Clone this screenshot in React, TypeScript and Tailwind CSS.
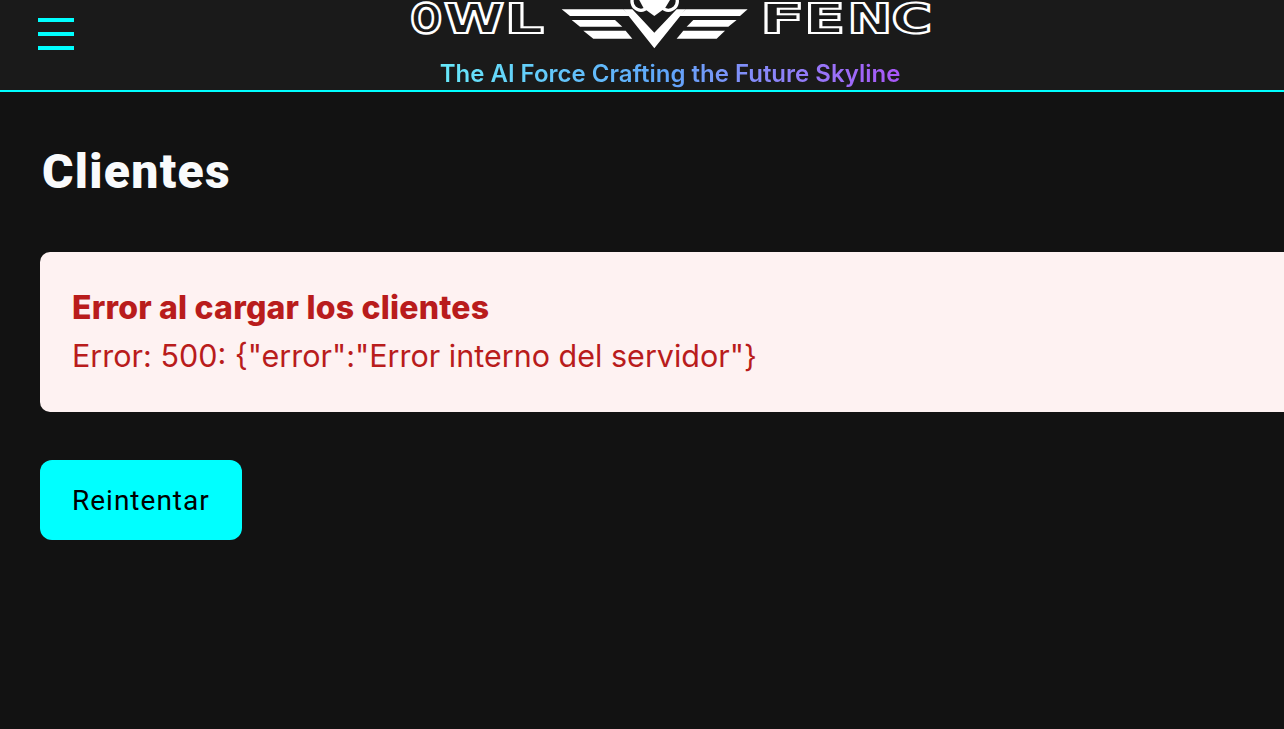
import React from 'react';

function Letter({ ch, x, sx }: { ch: string; x: number; sx: number }) {
  return (
    <text
      transform={`translate(${x} 33) scale(${sx} 1)`}
      fontFamily="'DejaVu Sans', sans-serif"
      fontWeight={700}
      fontSize={41}
      fill="none"
      stroke="#ffffff"
      strokeWidth={2.6}
      vectorEffect="non-scaling-stroke"
    >
      {ch}
    </text>
  );
}

function Logo() {
  return (
    <svg width="520" height="50" viewBox="410 0 520 50" className="block overflow-visible">
      <Letter ch="O" x={410.6} sx={0.9} />
      <Letter ch="W" x={444} sx={1.33} />
      <Letter ch="L" x={504.7} sx={1.5} />
      <Letter ch="F" x={760} sx={1.6} />
      <Letter ch="E" x={804} sx={1.47} />
      <Letter ch="N" x={847.5} sx={1.3} />
      <Letter ch="C" x={891.5} sx={1.35} />
      {/* wings, drawn in 3x units from the crop */}
      <g transform="translate(555 0) scale(0.3333)" fill="#ffffff">
        <polygon points="20,28 205,28 225,48 45,48" />
        <polygon points="578,28 392,28 372,48 555,48" />
        <polygon points="205,28 232,28 298,98 365,28 392,28 298,145" />
        <polygon points="50,60 180,60 202,80 75,80" />
        <polygon points="545,60 415,60 395,80 520,80" />
        <polygon points="85,92 212,92 232,116 115,116" />
        <polygon points="510,92 385,92 365,116 485,116" />
      </g>
      <g transform="translate(555 0) scale(0.3333)">
        <circle cx="258" cy="4" r="27" fill="#1a1a1a" stroke="#ffffff" strokeWidth="10" />
        <circle cx="340" cy="4" r="27" fill="#1a1a1a" stroke="#ffffff" strokeWidth="10" />
        <path d="M250 -5 H348 L330 25 L298 48 L266 25 Z" fill="#ffffff" />
      </g>
    </svg>
  );
}

export default function App() {
  return (
    <div className="h-screen w-full overflow-hidden bg-[#121212] font-['Inter',sans-serif]">
      <header className="flex h-[92px] items-start border-b-2 border-[#00ffff] bg-[#1a1a1a]">
        <button className="ml-[38px] mt-[18px] flex w-9 flex-col gap-[10px]">
          <span className="h-1 bg-[#00ffff]"></span>
          <span className="h-1 bg-[#00ffff]"></span>
          <span className="h-1 bg-[#00ffff]"></span>
        </button>
        <div className="ml-[336px] flex w-[520px] flex-col items-center">
          <Logo />
          <div className="mt-[10px] bg-gradient-to-r from-[#67e8f9] via-[#60a5fa] to-[#a855f7] bg-clip-text text-[24px] font-semibold leading-7 text-transparent">
            The AI Force Crafting the Future Skyline
          </div>
        </div>
      </header>

      <main className="px-10 pt-[52px]">
        <h1 className="pl-[2px] font-['Roboto',sans-serif] text-[48px] font-black leading-[56px] tracking-[1.3px] text-[#f9fafb]">
          Clientes
        </h1>
        <div className="mt-[52px] h-40 w-[1300px] rounded-[10px] bg-[#fef2f2] px-8 pt-[36px] text-[#b91c1c]">
          <h2 className="text-[32px] font-extrabold leading-10 tracking-[0.2px]">Error al cargar los clientes</h2>
          <p className="mt-2 text-[30.5px] leading-10">Error: 500: {'{"error":"Error interno del servidor"}'}</p>
        </div>
        <button className="mt-12 flex h-20 w-[202px] items-center rounded-xl bg-[#00ffff] pl-8 pt-[2px] font-['Roboto',sans-serif] text-[28px] tracking-[1px] text-black">
          Reintentar
        </button>
      </main>
    </div>
  );
}
